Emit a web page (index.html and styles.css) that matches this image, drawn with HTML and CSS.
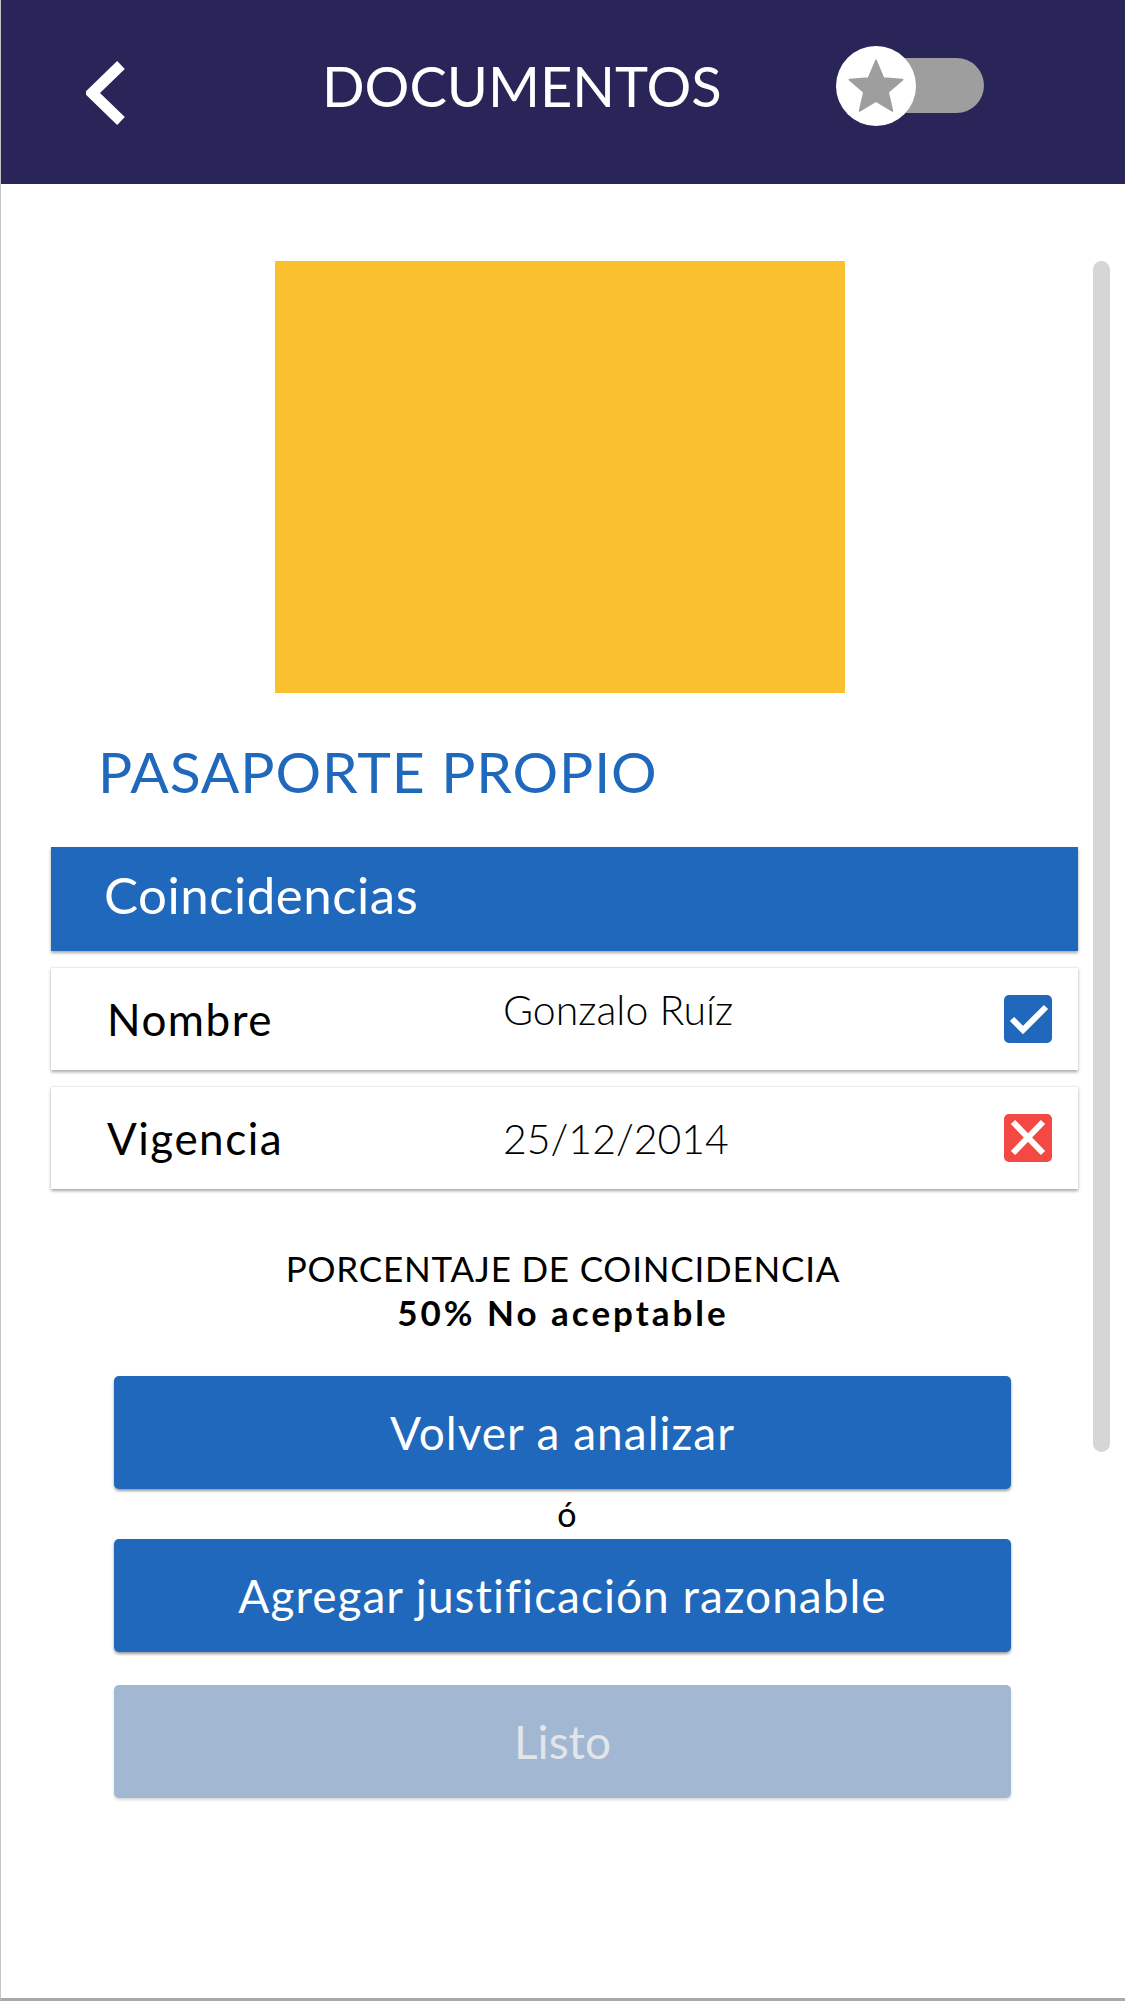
FILE: index.html
```html
<!DOCTYPE html>
<html lang="es">
<head>
<meta charset="utf-8">
<title>Documentos</title>
<link rel="stylesheet" href="styles.css">
</head>
<body>
<div class="screen">
  <header class="topbar">
    <svg class="back" width="40" height="66" viewBox="0 0 40 66" aria-hidden="true">
      <polyline points="35,5 6,33 35,61" fill="none" stroke="#fff" stroke-width="11"/>
    </svg>
    <h1 class="title">DOCUMENTOS</h1>
    <div class="toggle">
      <div class="track"></div>
      <div class="knob">
        <svg width="64" height="64" viewBox="0 0 24 24" aria-hidden="true">
          <path d="M12 17.27L18.18 21l-1.64-7.03L22 9.24l-7.19-.61L12 2 9.19 8.63 2 9.24l5.46 4.73L5.82 21z" fill="#9e9e9e" stroke="#9e9e9e" stroke-width="0.6" stroke-linejoin="round"/>
        </svg>
      </div>
    </div>
  </header>

  <main class="content">
    <div class="scrollbar"></div>
    <div class="photo"></div>
    <h2 class="doc-name">PASAPORTE PROPIO</h2>
    <div class="section-bar">Coincidencias</div>
    <div class="match-row">
      <span class="label">Nombre</span>
      <span class="value raised">Gonzalo Ruíz</span>
      <span class="status ok">
        <svg width="48" height="48" viewBox="0 0 48 48" aria-hidden="true">
          <polyline points="8,24 19,35 42,12" fill="none" stroke="#fff" stroke-width="6"/>
        </svg>
      </span>
    </div>
    <div class="match-row">
      <span class="label">Vigencia</span>
      <span class="value">25/12/2014</span>
      <span class="status bad">
        <svg width="48" height="48" viewBox="0 0 48 48" aria-hidden="true">
          <path d="M9 8L39 39M39 8L9 39" fill="none" stroke="#fff" stroke-width="6"/>
        </svg>
      </span>
    </div>

    <div class="result">
      <p class="result-title">PORCENTAJE DE COINCIDENCIA</p>
      <p class="result-value">50% No aceptable</p>
    </div>

    <button class="btn">Volver a analizar</button>
    <p class="or">ó</p>
    <button class="btn">Agregar justificación razonable</button>
    <button class="btn disabled">Listo</button>
  </main>
</div>
</body>
</html>
```

FILE: styles.css
```css
* {
  box-sizing: border-box;
}

html, body {
  margin: 0;
  padding: 0;
  background: #ffffff;
}

body {
  font-family: "Lato", "Noto Sans", sans-serif;
  color: #000;
}

.screen {
  width: 1125px;
  height: 2001px;
  overflow: hidden;
  border-left: 1px solid #c4c4c4;
  border-bottom: 3px solid #a8a8a8;
  background: #fff;
}

/* Header */
.topbar {
  height: 184px;
  background: #2a2559;
  display: flex;
  align-items: center;
  padding-left: 85px;
}

.back {
  display: block;
  flex: none;
  margin-top: 2px;
}

.title {
  margin: 0 0 12px 196px;
  font-size: 56px;
  font-weight: 400;
  line-height: 1.2;
  color: #fff;
}

.toggle {
  position: relative;
  flex: none;
  width: 148px;
  height: 80px;
  margin-left: auto;
  margin-right: 141px;
  margin-bottom: 12px;
}

.track {
  position: absolute;
  left: 40px;
  top: 12px;
  width: 108px;
  height: 55px;
  border-radius: 28px;
  background: #9e9e9e;
}

.knob {
  position: absolute;
  left: 0;
  top: 0;
  width: 80px;
  height: 80px;
  border-radius: 50%;
  background: #fff;
  display: flex;
  align-items: center;
  justify-content: center;
}

.knob svg {
  display: block;
  margin-top: 2px;
}

/* Content */
.content {
  position: relative;
  padding-top: 77px;
}

.scrollbar {
  position: absolute;
  left: 1092px;
  top: 77px;
  width: 17px;
  height: 1191px;
  border-radius: 9px;
  background: #d6d6d6;
}

.photo {
  width: 570px;
  height: 432px;
  margin-left: 274px;
  background: #fbc02e;
}

.doc-name {
  margin: 44px 0 0 97px;
  font-size: 57px;
  font-weight: 400;
  line-height: 1.2;
  letter-spacing: 0.9px;
  color: #1f68bb;
}

.section-bar {
  margin: 42px 0 0 50px;
  width: 1027px;
  height: 104px;
  padding: 17px 0 0 53px;
  background: #1f68bb;
  color: #fff;
  font-size: 51px;
  line-height: 1.2;
  letter-spacing: 0.5px;
  box-shadow: 0 2px 3px rgba(0, 0, 0, 0.35);
}

.match-row {
  margin: 16px 0 0 50px;
  width: 1027px;
  height: 103px;
  display: grid;
  grid-template-columns: 396px 1fr 48px;
  align-items: center;
  padding: 0 26px 0 56px;
  background: #fff;
  border-top: 1px solid #ececec;
  box-shadow: 0 2px 3px rgba(0, 0, 0, 0.35);
}

.label {
  font-size: 44px;
  line-height: 1.2;
  letter-spacing: 1.5px;
  color: #000;
}

.value {
  font-size: 41px;
  line-height: 1.2;
  font-weight: 300;
  color: #000;
}

.value.raised {
  margin-bottom: 20px;
}

.status {
  width: 48px;
  height: 48px;
  border-radius: 5px;
  display: block;
}

.status svg {
  display: block;
}

.status.ok {
  background: #1f68bb;
}

.status.bad {
  background: #f44842;
}

.result {
  margin-top: 57px;
  text-align: center;
}

.result p {
  margin: 0;
  font-size: 35px;
  line-height: 44px;
}

.result-title {
  font-weight: 400;
  letter-spacing: 0.8px;
}

.result-value {
  font-weight: 700;
  letter-spacing: 3px;
}

.btn {
  display: flex;
  align-items: center;
  justify-content: center;
  width: 897px;
  height: 113px;
  margin: 42px 0 0 113px;
  padding: 0;
  border: none;
  border-radius: 5px;
  background: #1f68bb;
  color: #fff;
  font-family: "Lato", "Noto Sans", sans-serif;
  font-size: 46px;
  line-height: 1.2;
  letter-spacing: 1px;
  box-shadow: 0 2px 3px rgba(0, 0, 0, 0.4);
}

.or {
  margin: 0;
  height: 50px;
  text-align: center;
  font-size: 34px;
  line-height: 50px;
  padding-left: 8px;
}

.or + .btn {
  margin-top: 0;
}

.btn.disabled {
  margin-top: 33px;
  background: #a2b7d2;
  color: #e2e5ea;
  letter-spacing: 0;
  box-shadow: 0 2px 3px rgba(0, 0, 0, 0.15);
}
```
